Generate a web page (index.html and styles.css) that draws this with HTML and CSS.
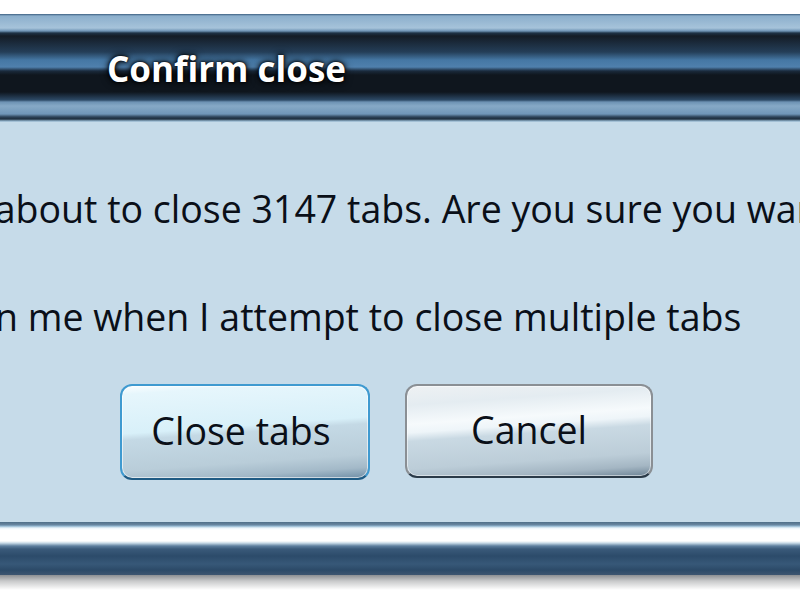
FILE: index.html
```html
<!DOCTYPE html>
<html>
<head>
<meta charset="utf-8">
<title>Confirm close</title>
<link rel="stylesheet" href="styles.css">
</head>
<body>
<div class="window">
  <div class="titlebar"><span class="title">Confirm close</span></div>
  <div class="content">
    <p class="msg line1"><span class="pre">You are</span> about to close 3147 tabs. Are you sure you want to continue?</p>
    <p class="msg line2"><span class="pre">War</span>n me when I attempt to close multiple tabs</p>
    <div class="buttons">
      <button class="btn btn-default">Close tabs</button>
      <button class="btn btn-cancel">Cancel</button>
    </div>
  </div>
  <div class="frame-bottom"></div>
  <div class="frame-shadow"></div>
</div>
</body>
</html>
```

FILE: styles.css
```css
html, body {
  margin: 0;
  padding: 0;
  background: #ffffff;
  overflow: hidden;
  width: 800px;
  height: 600px;
}

.window {
  margin-top: 14px;
  font-family: "Open Sans", "Noto Sans", sans-serif;
}

.titlebar {
  height: 108px;
  box-sizing: border-box;
  padding: 35px 0 0 107px;
  background: linear-gradient(to bottom,
    #3d5f80 0px,
    #8cafcc 2px,
    #a6c3da 14px,
    #6f94b5 17px,
    #1f3347 19px,
    #141c26 22px,
    #243e58 38px,
    #4577a4 46px,
    #4f80ad 53px,
    #1a2a3c 57px,
    #0f161e 61px,
    #0f161e 78px,
    #1d2f42 82px,
    #2d4a66 86px,
    #6d92b3 88px,
    #86a9c6 92px,
    #7096b8 100px,
    #2c4258 103px,
    #1e2e3e 105px,
    #8fb0c8 107px,
    #b8d0e2 108px);
}

.title {
  display: block;
  font-weight: 700;
  font-size: 35px;
  line-height: 40px;
  color: #ffffff;
  white-space: nowrap;
  text-shadow: 0 0 2px #000, 0 0 5px #000, 0 0 9px rgba(0,0,0,0.85);
}

.content {
  height: 400px;
  box-sizing: border-box;
  background: #c6dbe9;
  padding-top: 67px;
}

.msg {
  margin: 0;
  font-size: 37.5px;
  line-height: 40px;
  color: #0a0f18;
  white-space: nowrap;
}

.line1 {
  margin-left: -15px;
}

.line2 {
  margin-top: 68px;
  margin-left: -5px;
}

.pre {
  display: inline-block;
  width: 0;
  direction: rtl;
  white-space: nowrap;
}

.buttons {
  display: flex;
  gap: 35px;
  padding-left: 120px;
  margin-top: 47px;
}

.btn {
  width: 250px;
  height: 96px;
  box-sizing: border-box;
  border-radius: 12px;
  font-family: "Open Sans", "Noto Sans", sans-serif;
  font-size: 37.5px;
  color: #0a0f18;
  padding: 0 8px 4px 0;
  display: flex;
  align-items: center;
  justify-content: center;
  margin: 0;
}

.btn-default {
  border: 2px solid #3f9ad0;
  border-bottom-color: #1f5b84;
  background:
    linear-gradient(176deg,
      #fbfeff 0%,
      #e6f6fc 8%,
      #d8f0f9 44%,
      #c4d9e5 50%,
      #b9cdd9 78%,
      #a3b9c8 90%,
      #6f8ea6 100%);
  box-shadow: inset 0 0 0 1px rgba(255,255,255,0.6);
}

.btn-cancel {
  width: 248px;
  height: 94px;
  padding-right: 0;
  border: 2px solid #8a8f94;
  border-bottom-color: #2a3a48;
  background:
    linear-gradient(176deg,
      #eef1f3 0%,
      #e4ecf1 18%,
      #f6fafc 36%,
      #eef5f9 44%,
      #c9d9e3 52%,
      #bccdd8 78%,
      #a4b6c3 90%,
      #6d8496 100%);
  box-shadow: inset 0 0 0 1px rgba(255,255,255,0.5);
}

.frame-bottom {
  height: 53px;
  background: linear-gradient(to bottom,
    #4f6e88 0px,
    #6a88a2 3px,
    #8fb5d0 4px,
    #eaf4fa 6px,
    #ffffff 8px,
    #ffffff 19px,
    #c9dbe8 21px,
    #5d7f9e 24px,
    #3a5a7a 27px,
    #2c4b6a 34px,
    #375878 42px,
    #2c4a68 48px,
    #3d5670 53px);
}

.frame-shadow {
  height: 15px;
  background: linear-gradient(to bottom, #8c8f92 0px, #c8c9ca 6px, #ffffff 15px);
}
```
